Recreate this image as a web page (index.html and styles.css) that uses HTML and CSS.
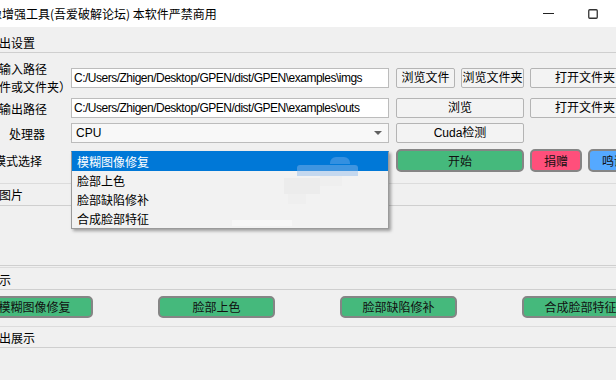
FILE: index.html
```html
<!DOCTYPE html>
<html lang="zh">
<head>
<meta charset="utf-8">
<link rel="stylesheet" href="styles.css">
</head>
<body>
<div class="win">
  <div class="titlebar">
    <span class="title">图像增强工具(吾爱破解论坛) 本软件严禁商用</span>
    <span class="spacer"></span>
    <svg class="tb-min" width="11" height="10" viewBox="0 0 11 10"><line x1="0" y1="4.5" x2="11" y2="4.5" stroke="#222" stroke-width="1"/></svg>
    <svg class="tb-max" width="10" height="10" viewBox="0 0 10 10"><rect x="0.75" y="0.75" width="8.5" height="8.5" rx="1" fill="none" stroke="#333" stroke-width="1.3"/></svg>
  </div>

  <div class="ghead first"><span class="gt">输出设置</span></div>
  <div class="gbody settings">
    <div class="row r1">
      <div class="lab"><span class="l-in">输入路径<br>（文件或文件夹）</span></div>
      <div class="input">C:/Users/Zhigen/Desktop/GPEN/dist/GPEN\examples\imgs</div>
      <div class="btn w59">浏览文件</div>
      <div class="btn w63">浏览文件夹</div>
      <div class="btn w110">打开文件夹</div>
    </div>
    <div class="row r2">
      <div class="lab"><span class="l-out">输出路径</span></div>
      <div class="input">C:/Users/Zhigen/Desktop/GPEN/dist/GPEN\examples\outs</div>
      <div class="btn w128">浏览</div>
      <div class="btn w110">打开文件夹</div>
    </div>
    <div class="row r3">
      <div class="lab"><span class="l-cpu">处理器</span></div>
      <div class="combo"><span>CPU</span><span class="arrow"></span></div>
      <div class="btn w128">Cuda检测</div>
    </div>
    <div class="row r4">
      <div class="lab"><span class="l-mode">模式选择</span></div>
      <div class="combo open">
        <span class="arrow"></span>
        <div class="popup">
          <div class="item sel">模糊图像修复</div>
          <div class="item">脸部上色</div>
          <div class="item">脸部缺陷修补</div>
          <div class="item">合成脸部特征</div>
          <div class="mz mz1"></div>
          <div class="mz mz2"></div>
          <div class="mz mz3"></div>
          <div class="mz mz4"></div>
          <div class="mz mz5"></div>
          <div class="mz mz6"></div>
        </div>
      </div>
      <div class="cbtn green w128">开始</div>
      <div class="cbtn pink w52">捐赠</div>
      <div class="cbtn blue w52">鸣谢</div>
    </div>
  </div>

  <div class="ghead h2"><span class="gt">原图片</span></div>
  <div class="gbody pic"></div>

  <div class="ghead h3"><span class="gt">展示</span></div>
  <div class="gbody demo">
    <div class="cbtn green w117">模糊图像修复</div>
    <div class="cbtn green w117">脸部上色</div>
    <div class="cbtn green w117">脸部缺陷修补</div>
    <div class="cbtn green w117">合成脸部特征</div>
  </div>

  <div class="ghead h4"><span class="gt">输出展示</span></div>
  <div class="gbody out"></div>
</div>
</body>
</html>
```

FILE: styles.css
```css
html, body {
  margin: 0;
  padding: 0;
  background: #f0f0f0;
  overflow: hidden;
}

.win {
  width: 616px;
  height: 380px;
  overflow: hidden;
  display: flex;
  flex-direction: column;
  font-family: "Noto Sans CJK SC", "Liberation Sans", sans-serif;
  font-size: 12px;
  color: #000;
  background: #f0f0f0;
}

/* title bar */
.titlebar {
  height: 27px;
  flex-shrink: 0;
  background: #fff;
  display: flex;
  align-items: center;
}
.title {
  margin-left: -22px;
  white-space: nowrap;
  line-height: 16px;
  font-size: 12px;
}
.spacer { flex: 1; }
.tb-min { margin-right: 34px; margin-top: 1px; }
.tb-max { margin-right: 18px; margin-top: 0; }

/* group headers and bodies */
.ghead {
  flex-shrink: 0;
  white-space: nowrap;
  border-top: 1px solid #dcdcdc;
}
.gt {
  display: block;
  margin-left: -13px;
}
.ghead.first {
  border-top: none;
  height: 25px;
  box-sizing: border-box;
  padding-top: 7px;
  line-height: 18px;
}
.ghead.h2 {
  height: 21px;
  line-height: 21px;
}
.ghead.h3 {
  padding-top: 2px;
  height: 19px;
  line-height: 19px;
}
.ghead.h4 {
  height: 18px;
  padding-top: 2px;
  line-height: 18px;
}

.gbody {
  flex-shrink: 0;
  border-top: 1px solid #cfcfcf;
}

.settings {
  padding-top: 15px;
  height: 115px;
  display: flex;
  flex-direction: column;
}

.pic {
  height: 59px;
  border-bottom: 1px solid #cfcfcf;
  margin-bottom: 1px;
}

.demo {
  height: 22px;
  padding: 6px 0 8px;
  display: flex;
  gap: 65px;
  margin-left: -24px;
  width: 700px;
}

.out {
  flex: 1;
}

/* rows */
.row {
  display: flex;
  align-items: center;
  flex-shrink: 0;
  width: 700px;
  white-space: nowrap;
}
.r1 { height: 20px; }
.r2 { height: 20px; margin-top: 10px; }
.r3 { height: 20px; margin-top: 5px; }
.r4 { height: 23px; margin-top: 6px; }

.lab {
  width: 71px;
  flex-shrink: 0;
  display: flex;
  align-items: center;
}
.lab span { display: block; flex-shrink: 0; }
.l-in {
  margin-left: -25px;
  width: 96px;
  text-align: center;
  line-height: 18px;
}
.l-out { margin-left: -1px; }
.l-cpu { margin-left: 9px; }
.l-mode { margin-left: -6px; }

.input {
  width: 318px;
  height: 20px;
  box-sizing: border-box;
  flex-shrink: 0;
  margin-right: 7px;
  background: #fff;
  border: 1px solid #bcbcbc;
  padding-left: 2px;
  font-family: "Liberation Sans", Arial, sans-serif;
  font-size: 12px;
  letter-spacing: -0.5px;
  line-height: 18px;
  overflow: hidden;
}

.combo {
  position: relative;
  width: 318px;
  height: 20px;
  box-sizing: border-box;
  flex-shrink: 0;
  margin-right: 7px;
  background: #f8f8f8;
  border: 1px solid #bcbcbc;
  padding-left: 4px;
  font-family: "Liberation Sans", "Noto Sans CJK SC", sans-serif;
  line-height: 18px;
  display: flex;
  align-items: center;
}
.arrow {
  position: absolute;
  right: 6px;
  top: 7px;
  width: 0;
  height: 0;
  border-left: 4px solid transparent;
  border-right: 4px solid transparent;
  border-top: 4px solid #606060;
}

.btn {
  height: 20px;
  box-sizing: border-box;
  flex-shrink: 0;
  margin-right: 6px;
  background: #f3f3f3;
  border: 1px solid #b4b4b4;
  border-radius: 2px;
  display: flex;
  align-items: center;
  justify-content: center;
  font-family: "Liberation Sans", "Noto Sans CJK SC", sans-serif;
  line-height: 16px;
}

.w52 { width: 52px; }
.w59 { width: 59px; }
.w63 { width: 63px; }
.w110 { width: 110px; }
.w117 { width: 117px; }
.w128 { width: 128px; }

.cbtn {
  height: 23px;
  box-sizing: border-box;
  flex-shrink: 0;
  margin-right: 6px;
  border: 2px solid #858585;
  border-radius: 5px;
  display: flex;
  align-items: center;
  justify-content: center;
  color: #111;
  line-height: 16px;
}
.demo .cbtn { height: 22px; margin-right: 0; }
.green { background: #45b97c; }
.pink { background: #ff4f7b; }
.blue { background: #55a9ff; }

/* popup list */
.popup {
  position: absolute;
  left: -1px;
  top: -1px;
  width: 318px;
  box-sizing: border-box;
  background: #f2f2f2;
  border: 1px solid #9a9a9a;
  border-top-color: #0078d7;
  box-shadow: 2px 2px 3px rgba(0, 0, 0, 0.35);
  font-family: "Noto Sans CJK SC", sans-serif;
  z-index: 5;
  overflow: hidden;
}
.item {
  height: 19px;
  line-height: 19px;
  padding-left: 5px;
  color: #000;
}
.item.sel {
  background: #0078d7;
  color: #fff;
}
.mz {
  position: absolute;
}
.mz1 { left: 225px; top: 13px; width: 61px; height: 11px; background: rgba(140, 185, 235, 0.45); border-radius: 3px 3px 0 0; }
.mz2 { left: 258px; top: 5px; width: 20px; height: 7px; background: rgba(150, 190, 240, 0.35); border-radius: 6px 6px 0 0; }
.mz3 { left: 212px; top: 26px; width: 36px; height: 16px; background: rgba(232, 232, 232, 0.6); }
.mz4 { left: 248px; top: 24px; width: 22px; height: 10px; background: rgba(236, 236, 236, 0.6); }
.mz5 { left: 216px; top: 42px; width: 18px; height: 10px; background: rgba(235, 235, 235, 0.5); }
.mz6 { left: 160px; top: 68px; width: 60px; height: 6px; background: rgba(250, 250, 250, 0.7); }
```
